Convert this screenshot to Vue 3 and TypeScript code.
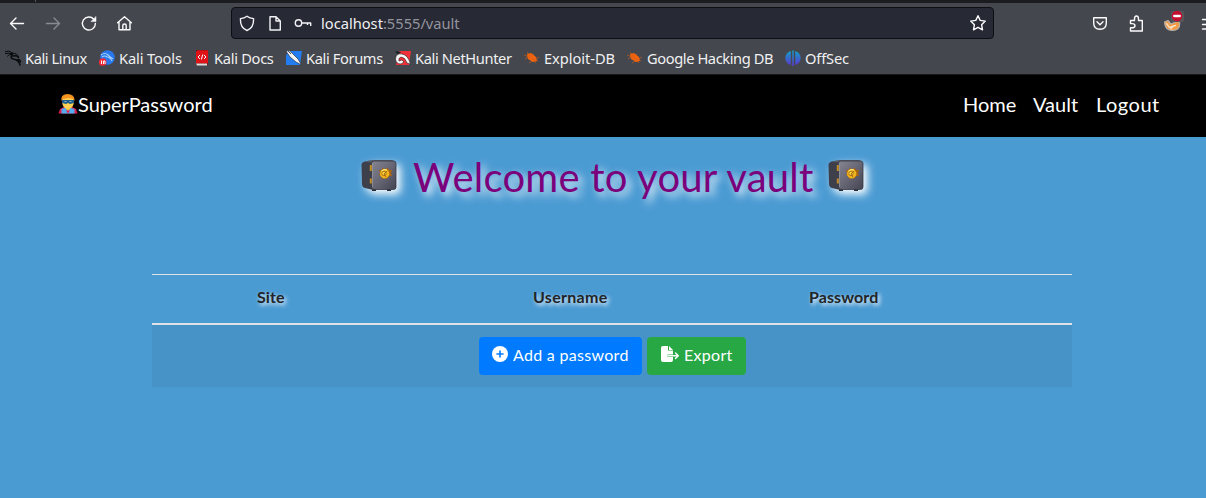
<script setup lang="ts">
interface Bookmark {
  label: string
  icon: string
  width: number
  spacing: number
}

const bookmarks: Bookmark[] = [
  { label: 'Kali Linux', icon: 'dragon', width: 94, spacing: -0.42 },
  { label: 'Kali Tools', icon: 'tools', width: 95, spacing: -0.15 },
  { label: 'Kali Docs', icon: 'docs', width: 92, spacing: -0.3 },
  { label: 'Kali Forums', icon: 'forums', width: 109, spacing: -0.38 },
  { label: 'Kali NetHunter', icon: 'hunter', width: 129, spacing: -0.38 },
  { label: 'Exploit-DB', icon: 'bug', width: 103, spacing: -0.05 },
  { label: 'Google Hacking DB', icon: 'bug', width: 158, spacing: -0.41 },
  { label: 'OffSec', icon: 'offsec', width: 80, spacing: -0.15 },
]
const columns: string[] = ['Site', 'Username', 'Password']
const links: string[] = ['Home', 'Vault', 'Logout']
</script>

<template>
  <div class="window">
    <div class="tabs"><i></i></div>
    <header class="chrome">
      <div class="toolbar">
        <svg class="nav-icons" width="231" height="40" viewBox="0 0 231 40" fill="none" stroke="#fbfbfe" stroke-width="1.4" stroke-linecap="round" stroke-linejoin="round">
          <path d="M10.500 21.500H23.500M16 16 10.500 21.500 16 27" />
          <path d="M46.500 21.500H59.500M54 16 59.500 21.500 54 27" stroke="#898b90" />
          <path d="M93.800 17.200A6.500 6.500 0 1 0 95.400 21.500" />
          <path d="M96 14.800V19.600H91.200Z" fill="#fbfbfe" stroke-width=".5" />
          <path d="M117.600 20.800 124.500 14.800 131.400 20.800M119 20V27.800H130V20M122.800 27.500V23.600Q122.800 22 124.500 22T126.200 23.600V27.500" />
        </svg>
        <div class="address">
          <svg width="89" height="31" viewBox="0 0 89 31" fill="none" stroke="#f2f2f6" stroke-width="1.4" stroke-linejoin="round">
            <path d="M15 8.300Q17.600 10.300 21.600 10.600C21.800 17 19.500 21 15 22.500C10.500 21 8.200 17 8.400 10.600Q12.400 10.300 15 8.300Z" />
            <path d="M38 8.700H44L48.300 13V22H38ZM44 9V13H48" />
            <circle cx="66.500" cy="15" r="3.200" /><path d="M70 15H78.700V18M75.500 15V17" />
          </svg>
          <span class="url">localhost<em>:5555/vault</em></span>
          <svg class="star" width="20" height="20" viewBox="0 0 20 20" fill="none" stroke="#fbfbfe" stroke-width="1.4" stroke-linejoin="round"><path d="m10 2.700 2.200 4.700 5.100.7-3.700 3.600.9 5.100-4.500-2.500-4.500 2.500.9-5.100L2.700 8.100l5.100-.7Z" /></svg>
        </div>
        <svg class="extensions" width="126" height="40" viewBox="0 0 126 40" fill="none" stroke="#fbfbfe" stroke-width="1.4" stroke-linecap="round" stroke-linejoin="round">
          <path d="M13.700 14.700H26.300V20Q26.300 26.300 20 26.300T13.700 20ZM17 18.800 20 21.700 23 18.800" />
          <path d="M50.500 17.500H54.500V16Q54.500 13 56.500 13T58.500 16V17.500H62.300V28H50.500V24.800H52Q55 24.800 55 22.700T52 20.600H50.500Z" />
          <path d="M84.500 19 88 17.500 91 21 98 18 99.700 20Q100 27.500 92.500 27.500T84.500 19Z" fill="#f29a44" stroke="#b7b1aa" stroke-width="1.200" />
          <path d="m86.500 20.500 3 4 6-2M91 26l2-3" stroke="#f7dec1" />
          <rect x="91" y="8" width="13" height="11" rx="2" fill="#55575b" stroke="none" />
          <circle cx="97" cy="13" r="5.300" fill="#c40e2e" stroke="none" /><path d="M94.300 13H99.700" stroke="#fff" stroke-width="2.400" />
          <path d="M122.500 16.500H128M122.500 21.500H128M122.500 26H128" />
        </svg>
      </div>
      <nav class="bookmarks">
        <a v-for="b in bookmarks" :key="b.label" :style="{ width: b.width + 'px', letterSpacing: b.spacing + 'px' }">
          <svg width="16" height="16" viewBox="0 0 16 16">
            <g v-if="b.icon === 'dragon'" fill="none" stroke="#080a0d" stroke-linecap="round">
              <path d="M.5 1.500Q4 0 7.500 3Q12 3.500 13.500 6M.5 3.500Q4 2.500 7 4M2.500 6Q4 4 7.500 4" stroke-width="1" />
              <path d="M7.500 3.500Q4.500 8 8 9C11.500 9.500 14 10.500 15 15M8 6Q12 5 13.500 7.500M12 10Q15 9 15.500 12" stroke-width="1.500" />
            </g>
            <g v-else-if="b.icon === 'tools'">
              <circle cx="8.500" cy="7.500" r="7.300" fill="#2877ec" /><path d="M2 5Q6 2 9 5T14 9M3 7Q6 5 8 7Q11 7 13 11" fill="none" stroke="#a1ceff" stroke-width="1.100" />
              <circle cx="3.700" cy="12" r="3.800" fill="#ef2938" /><path d="M2.500 10.500V14M4.500 14V11H6V14" fill="none" stroke="#fff" />
            </g>
            <g v-else-if="b.icon === 'docs'">
              <path d="M2 1Q2 0 3 0H14V15H2Z" fill="#8f1010" /><path d="M4 .500H14V13H2V2Z" fill="#df1317" /><path d="M2 13.500H13V15.500H3Z" fill="#ddd" />
              <path d="m6 5-2 2 2 2M10 5l2 2-2 2M8.700 4.500 7.400 9.500" fill="none" stroke="#fff" />
            </g>
            <g v-else-if="b.icon === 'forums'">
              <path d="M2 1H16L14 15H0V6Z" fill="#237df0" /><path d="M0 1 3 .5 6 3 12 9 15.500 15 10 12 4 7Z" fill="#f5f5f5" stroke="#273346" stroke-width=".7" /><path d="m2 1 3 3" stroke="#555" />
            </g>
            <g v-else-if="b.icon === 'hunter'">
              <path d="M4 1H16L14 15H1Z" fill="#ef3038" /><path d="M0 1 6 2 3 5Z" fill="#172029" /><path d="M15.500 14Q13 5 7 4Q1 3 .5 9Q1 14 6 14L9 12 7 10 4 11Q3 8 6 7Q10 7 12 13Z" fill="#f7f7f7" stroke="#29262b" stroke-width=".6" />
            </g>
            <g v-else-if="b.icon === 'bug'">
              <path d="M3 4 7 3 12 7 13 11 9 12 4 9Z" fill="#f2640d" /><path d="M0 5 14 11M1 9 10 4M5 13 15 7M3 2 12 13" stroke="#df6017" stroke-width=".6" />
            </g>
            <g v-else>
              <defs><linearGradient id="offsec-fill" x2="0" y2="1"><stop stop-color="#159cc6" /><stop offset="1" stop-color="#583bd0" /></linearGradient></defs>
              <path d="M5.800 1C-1.500 3-1.500 13 5.800 15ZM10.200 1C17.500 3 17.500 13 10.200 15Z" fill="url(#offsec-fill)" />
              <path d="M7.200 .500H8.800V16H7.200Z" fill="url(#offsec-fill)" />
            </g>
          </svg>
          <span>{{ b.label }}</span>
        </a>
      </nav>
    </header>
    <nav class="site-nav">
      <a class="brand">
        <svg width="20" height="20" viewBox="0 0 20 20">
          <path d="M.5 19.500 2 15 6 13H14L18 15 19.500 19.500Z" fill="#da204e" /><path d="M3.500 19.500V15Q6 13 10 13.500T16.500 15V19.500Z" fill="#55aaf0" /><path d="M8 12H12V15L10 17 8 15Z" fill="#eeb83d" /><path d="M8 16.500H12L10 19.500Z" fill="#e51e4a" />
          <path d="M4 7Q4 1 10 1T16 7Q16 14 10 15Q4 14 4 7Z" fill="#ffd153" /><path d="M3.500 7Q2 1 9 0Q17 0 16.500 7L15 5 11 4 5 5Z" fill="#f79420" /><path d="M4 6H16V9L12 10 10 9 8 10 4 9Z" fill="#1c5e89" /><path d="M6.500 7.500H8.500M11.500 7.500H13.500" stroke="#89b4c8" />
        </svg>
        <span>SuperPassword</span>
      </a>
      <div class="links"><a v-for="link in links" :key="link" :class="link.toLowerCase()">{{ link }}</a></div>
    </nav>
    <main>
      <h1>
        <svg v-for="n in 2" :key="n" :class="['safe', n === 2 ? 'last' : '']" width="36" height="34" viewBox="0 0 36 34">
          <defs>
            <linearGradient :id="'door' + n" x2="1" y2="1"><stop stop-color="#858592" /><stop offset=".5" stop-color="#666674" /><stop offset="1" stop-color="#444452" /></linearGradient>
          </defs>
          <path d="M11 29h4v3h-4ZM26 29h4v3h-4Z" fill="#292a35" />
          <path d="M.5 6Q.5 3 4 2.500L12 1.500V31L4 29Q1 28 1 25Z" fill="#3d3f4a" /><path d="M3 3Q8 1 13 1H31L34 2.500 12 3.500Z" fill="#565966" />
          <rect x="10.500" y="2" width="24.500" height="28.500" rx="2.500" :fill="`url(#door${n})`" stroke="#363844" stroke-width=".8" />
          <path d="M11.500 4V28" stroke="#9898a0" stroke-width=".7" /><path d="M9.800 6V12M9.800 19.500V24.500" stroke="#c58e25" stroke-width="2" />
          <path d="m21 9 3 1 3-1 1 2 3 0-1 3 1 3-3 0-2 3-2-1-3 1-1-3-2-1 1-2-1-3 3 0Z" fill="#a86410" />
          <circle cx="23.700" cy="14.800" r="4.700" fill="#f0b61c" /><circle cx="23" cy="14.500" r="2.200" fill="#f7d43c" stroke="#a66516" stroke-width=".8" /><path d="M23 15 26 12M23 15 25 18" fill="none" stroke="#8f4f10" stroke-width=".8" /><path d="M20.500 12Q23 9.500 26 11" fill="none" stroke="#fff18b" />
        </svg>
        <span>Welcome to your vault</span>
      </h1>
      <section class="vault-table">
        <div class="head"><strong v-for="c in columns" :key="c" :class="'col-' + c.toLowerCase()">{{ c }}</strong></div>
        <div class="actions">
          <button class="add"><svg width="16" height="16" viewBox="0 0 16 16"><circle cx="8" cy="8" r="8" fill="#fff" /><path d="M8 5V11M5 8H11" stroke="#007bff" stroke-width="1.600" stroke-linecap="round" /></svg><span>Add a password</span></button>
          <button class="export"><svg width="19" height="16" viewBox="0 0 19 16"><path d="M3 0H8V4.500H13V8.500H7.500V11H13V14Q13 16 11 16H3Q1 16 1 14V2Q1 0 3 0ZM9 0 13 4H9Z" fill="#fff" /><path d="M8 9.700H18M15.500 7 18.300 9.700 15.500 12.500" fill="none" stroke="#fff" stroke-width="1.400" stroke-linecap="round" stroke-linejoin="round" /></svg><span>Export</span></button>
        </div>
      </section>
    </main>
  </div>
</template>

<style>
body { margin: 0; background: #4b9bd3; }
</style>
<style scoped>
* { box-sizing: border-box; }
.window { width: 1206px; height: 498px; overflow: hidden; background: #4b9bd3; font-family: Lato, sans-serif; }
svg { display: block; flex: none; }
span, a { white-space: nowrap; }
.tabs { height: 3px; background: #1b1c20; }
.tabs i { display: block; width: 36px; height: 2px; border-right: 1px solid #54565a; }
.chrome { height: 72px; background: #44474d; border-bottom: 1px solid #17181c; font-family: "Noto Sans", sans-serif; color: #f0f0f2; }
.toolbar { height: 40px; display: flex; }
.nav-icons { margin-top: -1px; }
.address { width: 763px; height: 32px; margin-top: 4px; border: 1px solid #0d0e13; border-radius: 4px; background: #272935; display: flex; align-items: center; }
.url { width: 647px; font-size: 14.667px; }
.url em { font-style: normal; color: #94959c; }
.extensions { margin-left: 86px; }
.bookmarks { height: 30px; padding-left: 5px; display: flex; align-items: center; font-size: 14.667px; }
.bookmarks a { display: flex; align-items: center; gap: 4px; flex: none; }
.site-nav { height: 62px; padding: 0 46px 4px 58px; background: #000; display: flex; align-items: center; justify-content: space-between; color: #fff; font-size: 20px; }
.brand { display: flex; align-items: center; }
.links { display: flex; }
.home { width: 70px; }
.vault { width: 63px; }
.logout { width: 64px; letter-spacing: .5px; }
h1 { height: 83px; margin: 0; padding: 18px 0 0 361px; display: flex; align-items: flex-start; gap: 16px; font-size: 40px; font-weight: 400; line-height: 44px; color: #7b007b; text-shadow: 4px 4px 8px #fff; }
h1 span { width: 399px; order: 1; letter-spacing: .23px; }
.safe { margin-top: 4px; filter: drop-shadow(4px 4px 4px #fff); }
.last { order: 2; }
.vault-table { width: 920px; margin: 54px 0 0 152px; }
.head { height: 51px; padding: 0 0 4px 105px; border-top: 1px solid #dee2e6; border-bottom: 2px solid #dee2e6; display: flex; align-items: center; font-size: 16px; color: #212529; text-shadow: 2px 2px 4px #fff; }
.head strong { width: 276px; flex: none; line-height: 24px; letter-spacing: .1px; }
.head .col-username { letter-spacing: .3px; }
.actions { height: 62px; padding-left: 327px; display: flex; align-items: center; gap: 5px; background: rgba(0,0,0,.05); }
button { height: 38px; padding: 0 0 4px 13px; border: 0; border-radius: 4px; display: flex; align-items: center; gap: 5px; color: #fff; font: 16px Lato, sans-serif; letter-spacing: .3px; }
.add { width: 163px; background: #007bff; }
.export { width: 99px; background: #28a745; }
</style>
